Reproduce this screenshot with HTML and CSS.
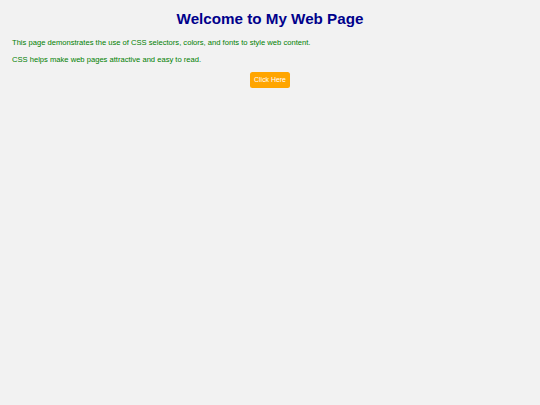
FILE: index.html
```html
<!DOCTYPE html>
<html>
<head>
<meta charset="utf-8">
<link rel="stylesheet" href="styles.css">
</head>
<body>
<h1 class="title">Welcome to My Web Page</h1>
<p class="text">This page demonstrates the use of CSS selectors, colors, and fonts to style web content.</p>
<p class="text">CSS helps make web pages attractive and easy to read.</p>
<div class="actions"><button class="btn">Click Here</button></div>
</body>
</html>
```
FILE: styles.css
```css
html, body {
  margin: 0;
  background: #f2f2f2;
}
body {
  padding: 0 12px;
  font-family: "Liberation Sans", Arial, sans-serif;
}
.title {
  margin: 10px 0 10px;
  font-size: 15.2px;
  line-height: 18px;
  font-weight: bold;
  color: #00008b;
  text-align: center;
}
.text {
  margin: 8px 0;
  font-size: 7.6px;
  line-height: 9px;
  color: #008000;
}
.actions {
  display: flex;
  justify-content: center;
  margin-top: -0.5px;
}
.btn {
  font-family: "Liberation Sans", Arial, sans-serif;
  font-size: 6.9px;
  line-height: 8.5px;
  padding: 4px 4px;
  background: #ffa500;
  color: #fff;
  border: none;
  border-radius: 2.5px;
}
```
